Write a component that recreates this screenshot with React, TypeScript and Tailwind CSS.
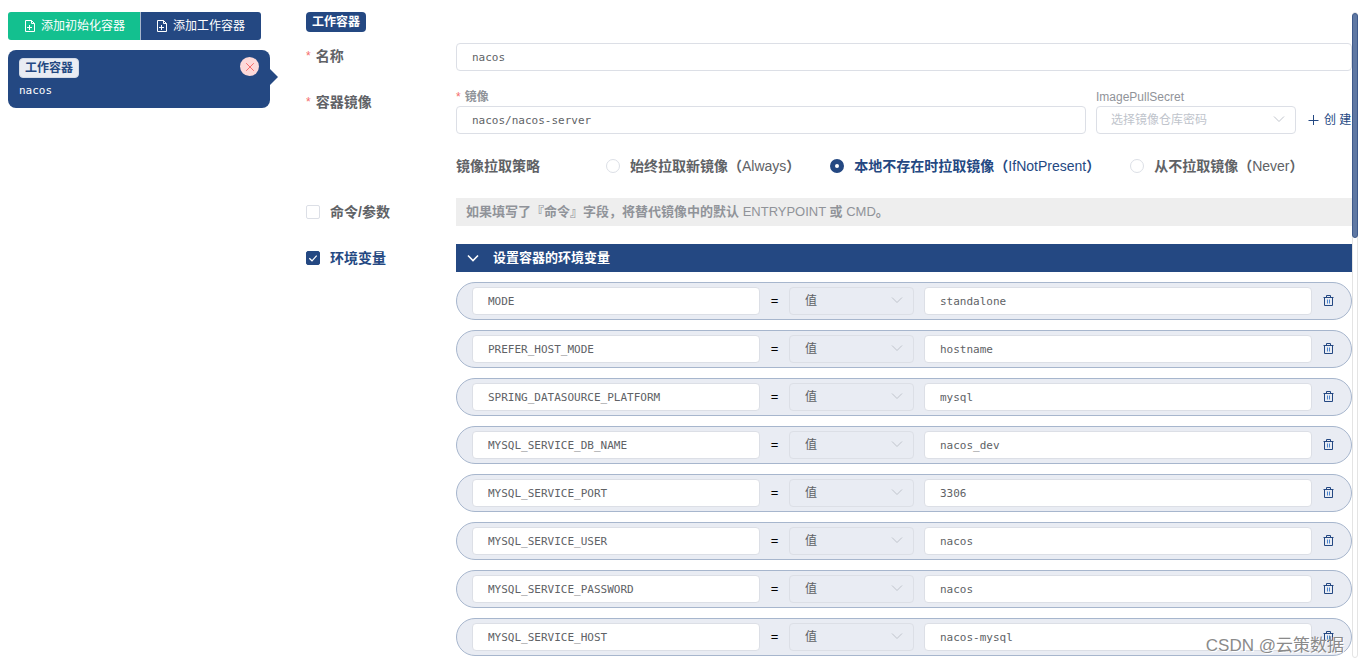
import { useState } from "react";
import type { ReactNode } from "react";

type EnvVar = { name: string; value: string };

const ENV_VARS: EnvVar[] = [
  { name: "MODE", value: "standalone" },
  { name: "PREFER_HOST_MODE", value: "hostname" },
  { name: "SPRING_DATASOURCE_PLATFORM", value: "mysql" },
  { name: "MYSQL_SERVICE_DB_NAME", value: "nacos_dev" },
  { name: "MYSQL_SERVICE_PORT", value: "3306" },
  { name: "MYSQL_SERVICE_USER", value: "nacos" },
  { name: "MYSQL_SERVICE_PASSWORD", value: "nacos" },
  { name: "MYSQL_SERVICE_HOST", value: "nacos-mysql" },
];

const POLICIES = [
  { id: "Always", text: "始终拉取新镜像" },
  { id: "IfNotPresent", text: "本地不存在时拉取镜像" },
  { id: "Never", text: "从不拉取镜像" },
];

const INPUT =
  "h-7 min-w-0 rounded border border-[#dcdfe6] bg-white px-[15px] font-['DejaVu_Sans_Mono','Noto_Sans_CJK_SC',monospace] text-[11px] text-[#606266] outline-none focus:border-[#244882]";

function DocumentAddIcon() {
  return (
    <svg viewBox="0 0 12 12" className="size-3" fill="none" stroke="currentColor" aria-hidden="true">
      <path d="M1.5 .5h6l3 3v8h-9z" />
      <path d="M7.5 .5v3h3" />
      <path d="M5.5 5v5M3 7.5h5" />
    </svg>
  );
}

function ChevronIcon({ className }: { className: string }) {
  return (
    <svg viewBox="0 0 12 12" className={className} fill="none" stroke="currentColor" aria-hidden="true">
      <path d="M1 3.5 6 8.5l5-5" />
    </svg>
  );
}

function TrashIcon() {
  return (
    <svg viewBox="0 0 12 12" className="size-3" fill="none" stroke="currentColor" aria-hidden="true">
      <path d="M.5 2.5h10M3.5 2V.5h4V2M1.5 2.5v8h8v-8" />
      <path d="M4.5 4.5v4M6.5 4.5v4" stroke="#4c86cf" />
    </svg>
  );
}

function CheckBox({ id, checked, onChange, children }: { id: string; checked: boolean; onChange: () => void; children: ReactNode }) {
  return (
    <label
      htmlFor={id}
      className="flex h-7 w-[150px] shrink-0 items-center gap-2.5 text-sm font-bold text-[#606266] has-checked:text-[#244882]"
    >
      <span className="grid size-3.5 place-items-center text-white">
        <input
          id={id}
          type="checkbox"
          checked={checked}
          onChange={onChange}
          className="col-start-1 row-start-1 size-3.5 appearance-none rounded-xs border border-[#dcdfe6] bg-white checked:border-[#244882] checked:bg-[#244882]"
        />
        {checked && (
          <svg viewBox="0 0 14 14" className="pointer-events-none col-start-1 row-start-1 size-3.5" fill="none" stroke="currentColor" strokeWidth="1.2" aria-hidden="true">
            <path d="M3.3 7.2 6 9.8l4.7-5.1" />
          </svg>
        )}
      </span>
      <span>{children}</span>
    </label>
  );
}

function FieldLabel({ htmlFor, children }: { htmlFor: string; children: ReactNode }) {
  return (
    <label htmlFor={htmlFor} className="flex h-[26px] w-[150px] shrink-0 items-center gap-[5px] text-sm font-bold text-[#606266]">
      <span className="text-xs font-normal text-[#f56c6c]">*</span>
      {children}
    </label>
  );
}

function EnvRow({ item, index }: { item: EnvVar; index: number }) {
  return (
    <li className="flex h-[38px] items-center rounded-full border border-[#a7b6cd] bg-[#e9ecf3] pl-[15px]">
      <input aria-label={"变量名 " + (index + 1)} defaultValue={item.name} className={INPUT + " w-72"} />
      <span className="w-[29px] shrink-0 text-center text-[13px] text-black">=</span>
      <span className="relative mr-2.5 w-[125px] shrink-0">
        <select
          aria-label={"类型 " + (index + 1)}
          className="block h-7 w-full appearance-none rounded border border-[#dcdfe6] bg-transparent px-[15px] text-xs text-[#606266] outline-none"
        >
          <option>值</option>
        </select>
        <ChevronIcon className="pointer-events-none absolute top-[7px] right-[11px] size-3 text-[#c0c4cc]" />
      </span>
      <input aria-label={"变量值 " + (index + 1)} defaultValue={item.value} className={INPUT + " flex-1"} />
      <button type="button" aria-label="删除" className="grid h-7 w-[39px] shrink-0 place-items-center pr-[5px] text-[#244882]">
        <TrashIcon />
      </button>
    </li>
  );
}

export default function App() {
  const [policy, setPolicy] = useState("IfNotPresent");
  const [command, setCommand] = useState(false);
  const [env, setEnv] = useState(true);

  return (
    <div className="relative flex h-screen overflow-hidden bg-white pt-3 pr-px pb-1.5 pl-2 font-['Liberation_Sans','Noto_Sans_CJK_SC',sans-serif] text-sm text-[#606266]">
      <aside className="mr-9 w-[262px] shrink-0">
        <div className="flex text-xs text-white">
          <button type="button" className="flex h-7 items-center gap-[5px] rounded-l-[3px] border-r border-[#a7b6cd] bg-[#13c08f] pr-[15px] pl-4">
            <DocumentAddIcon />
            添加初始化容器
          </button>
          <button type="button" className="flex h-7 items-center gap-[5px] rounded-r-[3px] bg-[#244882] pr-4 pl-[15px]">
            <DocumentAddIcon />
            添加工作容器
          </button>
        </div>
        <div className="relative mt-2.5 h-[58px] rounded-lg bg-[#244882] px-[11px] pt-[7px] text-white">
          <div className="flex items-start justify-between">
            <span className="mt-px flex h-5 items-center rounded border border-[#d3dae6] bg-[#e9ecf3] px-[5px] text-xs font-bold text-[#244882]">工作容器</span>
            <button type="button" aria-label="移除" className="grid size-[19px] place-items-center rounded-full bg-[#fdd9d9] text-[#f56c6c]">
              <svg viewBox="0 0 10 10" className="size-2.5" fill="none" stroke="currentColor" aria-hidden="true">
                <path d="m1.2 1.2 7.6 7.6M8.8 1.2 1.2 8.8" />
              </svg>
            </button>
          </div>
          <p className="mt-[5px] font-['DejaVu_Sans_Mono',monospace] text-[11px] leading-4">nacos</p>
          <svg viewBox="0 0 8 16" className="absolute top-[19px] left-full h-4 w-2 text-[#244882]" fill="currentColor" aria-hidden="true">
            <path d="M0 0 8 8 0 16z" />
          </svg>
        </div>
      </aside>

      <main className="min-w-0 flex-1 overflow-hidden">
        <span className="flex h-5 w-fit items-center rounded bg-[#244882] px-1.5 text-xs font-bold text-white">工作容器</span>

        <div className="mt-[11px] flex">
          <FieldLabel htmlFor="name">名称</FieldLabel>
          <input id="name" defaultValue="nacos" className={INPUT + " flex-1"} />
        </div>

        <div className="mt-[18px] flex">
          <FieldLabel htmlFor="image">容器镜像</FieldLabel>
          <div className="flex min-w-0 flex-1 items-end">
            <div className="min-w-0 flex-1">
              <label htmlFor="image" className="mb-px flex h-4 items-center gap-1 text-xs font-bold text-[#909399]">
                <span className="font-normal text-[#f56c6c]">*</span>
                镜像
              </label>
              <input id="image" defaultValue="nacos/nacos-server" className={INPUT + " w-full"} />
            </div>
            <div className="mx-2.5 w-[200px] shrink-0">
              <label htmlFor="secret" className="mb-px flex h-4 items-center text-xs text-[#909399]">ImagePullSecret</label>
              <span className="relative block">
                <select
                  id="secret"
                  className="block h-7 w-full appearance-none rounded border border-[#dcdfe6] bg-white px-[14px] text-xs text-[#c0c4cc] outline-none"
                >
                  <option>选择镜像仓库密码</option>
                </select>
                <ChevronIcon className="pointer-events-none absolute top-[7px] right-[11px] size-3 text-[#c0c4cc]" />
              </span>
            </div>
            <button type="button" className="flex h-7 w-[46px] shrink-0 items-center gap-1 pl-0.5 text-xs whitespace-nowrap text-[#244882]">
              <svg viewBox="0 0 12 12" className="size-3" fill="none" stroke="currentColor" aria-hidden="true">
                <path d="M5.5 1v10M.5 6.5h10" />
              </svg>
              创 建
            </button>
          </div>
        </div>

        <div role="radiogroup" aria-labelledby="policy-title" className="mt-[18px] ml-[150px] flex h-7 items-center">
          <span id="policy-title" className="w-[150px] shrink-0 font-bold">镜像拉取策略</span>
          <div className="flex gap-[30px]">
            {POLICIES.map((p) => (
              <label key={p.id} className="flex items-center gap-2.5 whitespace-nowrap has-checked:text-[#244882]">
                <input
                  type="radio"
                  name="policy"
                  checked={policy === p.id}
                  onChange={() => setPolicy(p.id)}
                  className="size-3.5 appearance-none rounded-full border border-[#dcdfe6] bg-white checked:border-[5px] checked:border-[#244882]"
                />
                <span>
                  <b>{p.text}（</b>
                  {p.id}
                  <b>）</b>
                </span>
              </label>
            ))}
          </div>
        </div>

        <div className="mt-[18px] flex">
          <CheckBox id="command" checked={command} onChange={() => setCommand(!command)}>
            命令/参数
          </CheckBox>
          <p className="flex h-7 flex-1 items-center bg-[#eeeeee] px-2.5 text-[13px] text-[#909399]">
            <span>
              <b>如果填写了『命令』字段，将替代镜像中的默认</b> ENTRYPOINT <b>或</b> CMD<b>。</b>
            </span>
          </p>
        </div>

        <div className="mt-[18px] flex">
          <CheckBox id="env" checked={env} onChange={() => setEnv(!env)}>
            环境变量
          </CheckBox>
          <div className="min-w-0 flex-1">
            <button type="button" className="flex h-7 w-full items-center gap-3.5 bg-[#244882] pl-[11px] text-[13px] font-bold text-white">
              <ChevronIcon className="size-3 stroke-[1.6]" />
              设置容器的环境变量
            </button>
            <ul className="mt-2.5 flex flex-col gap-2.5">
              {ENV_VARS.map((item, i) => (
                <EnvRow key={item.name} item={item} index={i} />
              ))}
            </ul>
          </div>
        </div>
      </main>

      <div className="w-1.5 shrink-0 rounded-full border border-[#e4e4e4] bg-white">
        <div className="-mx-px h-[35%] rounded-full border border-[#3f5b8c] bg-[#5f78a3]" />
      </div>

      <p className="pointer-events-none absolute right-[15px] bottom-1.5 text-[17px] leading-6 text-[#8a8a8a] [text-shadow:1px_1px_0_#ffffff]">CSDN @云策数据</p>
    </div>
  );
}
